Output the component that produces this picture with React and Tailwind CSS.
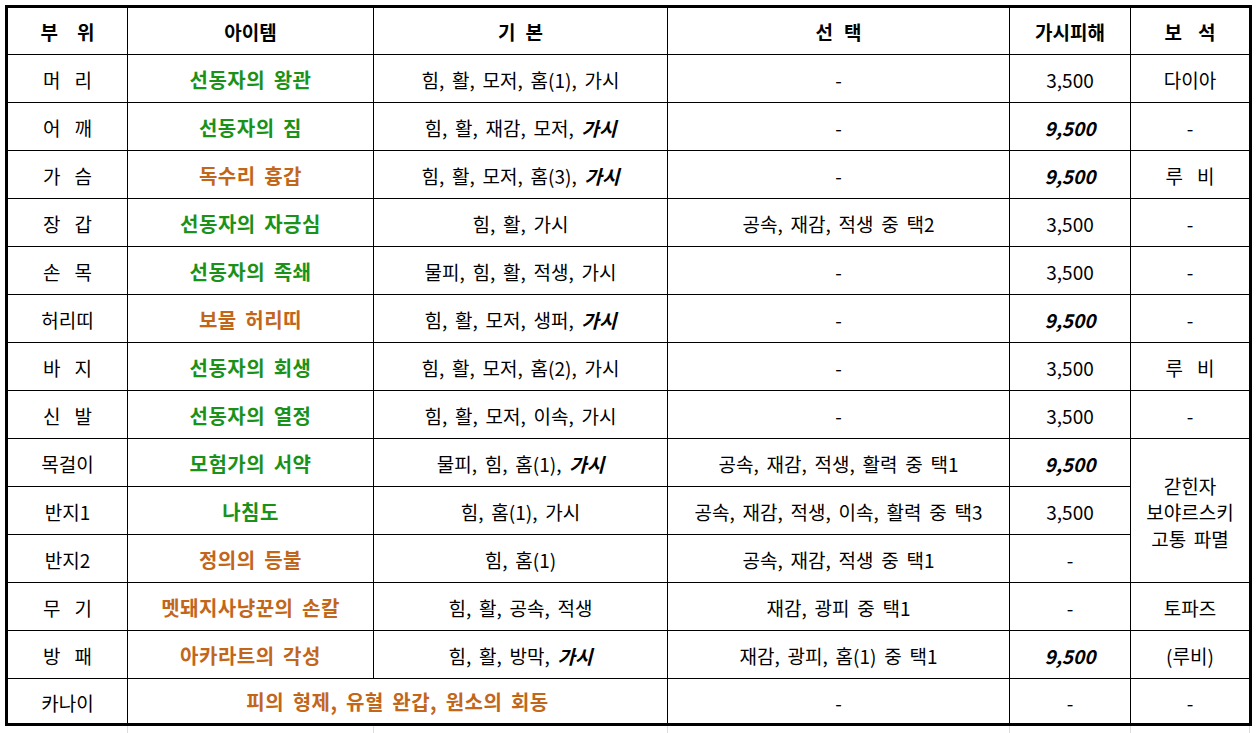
import React from "react";

const G = "text-[#1a921a]";
const O = "text-[#c2661a]";

function Spaced({ text, gap = "gap-[16px]" }) {
  const parts = text.split(" ");
  return (
    <span className={`inline-flex ${gap}`}>
      {parts.map((p, i) => (
        <span key={i}>{p}</span>
      ))}
    </span>
  );
}

const rows = [
  { part: "머 리", item: "선동자의 왕관", c: G, basic: "힘, 활, 모저, 홈(1), 가시", opt: "-", dmg: "3,500", gem: "다이아" },
  { part: "어 깨", item: "선동자의 짐", c: G, basic: "힘, 활, 재감, 모저, ", it: "가시", opt: "-", dmg: "9,500", bi: true, gem: "-" },
  { part: "가 슴", item: "독수리 흉갑", c: O, basic: "힘, 활, 모저, 홈(3), ", it: "가시", opt: "-", dmg: "9,500", bi: true, gem: "루 비", gs: true },
  { part: "장 갑", item: "선동자의 자긍심", c: G, basic: "힘, 활, 가시", opt: "공속, 재감, 적생 중 택2", dmg: "3,500", gem: "-" },
  { part: "손 목", item: "선동자의 족쇄", c: G, basic: "물피, 힘, 활, 적생, 가시", opt: "-", dmg: "3,500", gem: "-" },
  { part: "허리띠", item: "보물 허리띠", c: O, basic: "힘, 활, 모저, 생퍼, ", it: "가시", opt: "-", dmg: "9,500", bi: true, gem: "-", ns: true },
  { part: "바 지", item: "선동자의 회생", c: G, basic: "힘, 활, 모저, 홈(2), 가시", opt: "-", dmg: "3,500", gem: "루 비", gs: true },
  { part: "신 발", item: "선동자의 열정", c: G, basic: "힘, 활, 모저, 이속, 가시", opt: "-", dmg: "3,500", gem: "-" },
  { part: "목걸이", item: "모험가의 서약", c: G, basic: "물피, 힘, 홈(1), ", it: "가시", opt: "공속, 재감, 적생, 활력 중 택1", dmg: "9,500", bi: true, gem: "span", ns: true },
  { part: "반지1", item: "나침도", c: G, basic: "힘, 홈(1), 가시", opt: "공속, 재감, 적생, 이속, 활력 중 택3", dmg: "3,500", gem: null, ns: true },
  { part: "반지2", item: "정의의 등불", c: O, basic: "힘, 홈(1)", opt: "공속, 재감, 적생 중 택1", dmg: "-", gem: null, ns: true },
  { part: "무 기", item: "멧돼지사냥꾼의 손칼", c: O, basic: "힘, 활, 공속, 적생", opt: "재감, 광피 중 택1", dmg: "-", gem: "토파즈" },
  { part: "방 패", item: "아카라트의 각성", c: O, basic: "힘, 활, 방막, ", it: "가시", opt: "재감, 광피, 홈(1) 중 택1", dmg: "9,500", bi: true, gem: "(루비)" },
];

const cell = "bg-white flex items-center justify-center text-center";
const itemCls = "text-[20px] tracking-[0.5px]";

export default function App() {
  return (
    <div className="w-[1258px] h-[733px] bg-white overflow-hidden pt-[5px] pl-[5px] font-['Noto_Sans_CJK_KR','Noto_Sans',sans-serif] text-[19px] leading-none text-black [word-spacing:3.5px]">
      <div className="w-[1247px] border-[3px] border-black bg-black grid gap-px grid-cols-[119px_245px_293px_341px_120px_118px] grid-rows-[46px_repeat(13,47px)_44px]">
        <div className={`${cell} font-bold`}><Spaced text="부 위" gap="gap-[19px]" /></div>
        <div className={`${cell} font-bold`}>아이템</div>
        <div className={`${cell} font-bold`}><Spaced text="기 본" gap="gap-[10px]" /></div>
        <div className={`${cell} font-bold`}><Spaced text="선 택" gap="gap-[11px]" /></div>
        <div className={`${cell} font-bold`}>가시피해</div>
        <div className={`${cell} font-bold`}><Spaced text="보 석" gap="gap-[16px]" /></div>

        {rows.map((r, i) => (
          <React.Fragment key={i}>
            <div className={`${cell} pt-[2px]`}>{r.ns ? r.part : <Spaced text={r.part} gap="gap-[14px]" />}</div>
            <div className={`${cell} pt-[2px] font-bold ${itemCls} ${r.c}`}>{r.item}</div>
            <div className={`${cell} pt-[2px] whitespace-pre`}>
              {r.basic}
              {r.it && <span className="font-bold italic">{r.it}</span>}
            </div>
            <div className={`${cell} pt-[2px] whitespace-pre`}>{r.opt}</div>
            <div className={`${cell} pt-[2px] ${r.bi ? "font-bold italic" : ""}`}>{r.dmg}</div>
            {r.gem === "span" ? (
              <div className={`${cell} row-span-3 flex-col leading-[26.5px] pt-[4px]`}>
                <span>갇힌자</span>
                <span>보야르스키</span>
                <span>고통 파멸</span>
              </div>
            ) : r.gem === null ? null : (
              <div className={`${cell} pt-[2px]`}>{r.gs ? <Spaced text={r.gem} gap="gap-[14px]" /> : r.gem}</div>
            )}
          </React.Fragment>
        ))}

        <div className={`${cell} pt-[2px]`}>카나이</div>
        <div className={`${cell} pt-[2px] col-span-2 font-bold ${itemCls} ${O}`}>피의 형제, 유혈 완갑, 원소의 회동</div>
        <div className={`${cell} pt-[2px]`}>-</div>
        <div className={`${cell} pt-[2px]`}>-</div>
        <div className={`${cell} pt-[2px]`}>-</div>
      </div>
      <div className="ml-[3px] w-[1242px] h-[10px] grid gap-px bg-[#dcdcdc] grid-cols-[119px_245px_293px_341px_120px_118px]">
        <div className="bg-white" />
        <div className="bg-white" />
        <div className="bg-white" />
        <div className="bg-white" />
        <div className="bg-white" />
        <div className="bg-white" />
      </div>
    </div>
  );
}
